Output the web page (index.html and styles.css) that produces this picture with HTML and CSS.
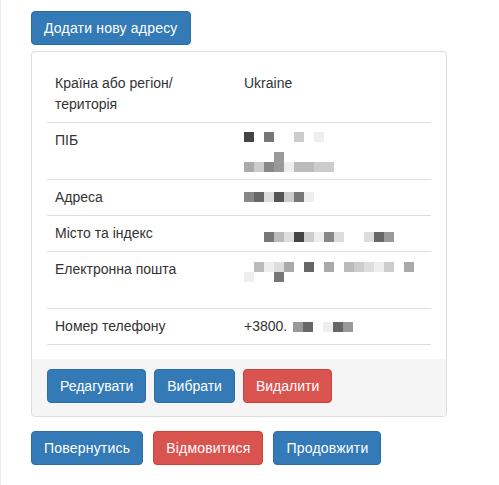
FILE: index.html
```html
<!DOCTYPE html>
<html lang="uk">
<head>
  <meta charset="UTF-8">
  <title>Адреса доставки</title>
  <link rel="stylesheet" href="styles.css">
</head>
<body>

  <button class="btn btn-primary btn-add">Додати нову адресу</button>

  <div class="panel">
    <div class="panel-body">
      <table class="address">
        <tr>
          <td class="label">Країна або регіон/<br>територія</td>
          <td>Ukraine</td>
        </tr>
        <tr>
          <td class="label">ПІБ</td>
          <td><div class="pix tall" data-top="2" data-px="4 7  c e||   9|ac89ebbcc"></div></td>
        </tr>
        <tr>
          <td class="label">Адреса</td>
          <td><div class="pix" data-top="5" data-px="86d5c7e f"></div></td>
        </tr>
        <tr>
          <td class="label">Місто та індекс</td>
          <td><div class="pix" data-top="9" data-px="  7bd4ce8d fd69"></div></td>
        </tr>
        <tr>
          <td class="label">Електронна пошта</td>
          <td><div class="pix tall" data-top="3" data-px=" beda 6 a bcdec a|e  7"></div></td>
        </tr>
        <tr>
          <td class="label">Номер телефону</td>
          <td>
            <div class="phone">
              <span>+3800.</span>
              <div class="pix" data-top="6" data-px="96 e69"></div>
            </div>
          </td>
        </tr>
      </table>
    </div>
    <div class="panel-footer">
      <button class="btn btn-primary">Редагувати</button>
      <button class="btn btn-primary">Вибрати</button>
      <button class="btn btn-danger">Видалити</button>
    </div>
  </div>

  <div class="actions">
    <button class="btn btn-primary">Повернутись</button>
    <button class="btn btn-danger">Відмовитися</button>
    <button class="btn btn-primary">Продовжити</button>
  </div>

  <script>
    // hidden personal data is shown as a grid of grey squares
    document.querySelectorAll('.pix').forEach(function (el) {
      el.style.paddingTop = el.dataset.top + 'px';
      el.dataset.px.split('|').forEach(function (line) {
        var row = document.createElement('div');
        row.className = 'pix-row';
        line.split('').forEach(function (c) {
          var cell = document.createElement('span');
          if (c !== ' ') cell.style.background = '#' + c + c + c;
          row.appendChild(cell);
        });
        el.appendChild(row);
      });
    });
  </script>

</body>
</html>
```

FILE: styles.css
```css
html, body {
  height: 100%;
}
body {
  margin: 0;
  padding: 11px 0 0 30px;
  box-sizing: border-box;
  border-left: 1px solid #ececec;
  font-family: "Liberation Sans", Arial, sans-serif;
  font-size: 14px;
  line-height: 21px;
  color: #333;
  background: #fff;
}

.btn {
  font-family: inherit;
  font-size: 14px;
  line-height: 20px;
  letter-spacing: 0.2px;
  padding: 6px 12px;
  border: 1px solid transparent;
  border-radius: 4px;
  color: #fff;
  cursor: pointer;
}
.btn-primary {
  background-color: #337ab7;
  border-color: #2e6da4;
}
.btn-danger {
  background-color: #d9534f;
  border-color: #d43f3a;
}
.btn-add {
  display: block;
  margin-bottom: 6px;
}

.panel {
  width: 416px;
  box-sizing: border-box;
  border: 1px solid #ddd;
  border-radius: 4px;
  background: #fff;
}
.panel-body {
  padding: 14px 15px;
}
.panel-footer {
  display: flex;
  gap: 8px;
  padding: 10px 15px 13px;
  background: #f5f5f5;
  border-radius: 0 0 3px 3px;
}
.panel-footer .btn {
  letter-spacing: 0;
}

.address {
  width: 100%;
  border-collapse: collapse;
  table-layout: fixed;
}
.address td {
  padding: 7px 8px;
  vertical-align: top;
  border-top: 1px solid #ddd;
}
.address tr:first-child td {
  border-top: none;
}
.address tr:last-child td {
  border-bottom: 1px solid #ddd;
}
.address td.label {
  width: 173px;
}

.pix {
  box-sizing: border-box;
}
.pix.tall {
  height: 42px;
}
.pix-row {
  display: flex;
  height: 10px;
}
.pix-row span {
  flex: none;
  width: 10px;
  height: 10px;
}

.phone {
  display: flex;
  align-items: flex-start;
}
.phone .pix {
  margin-left: 6px;
}

.actions {
  display: flex;
  gap: 10px;
  margin-top: 14px;
}
```
